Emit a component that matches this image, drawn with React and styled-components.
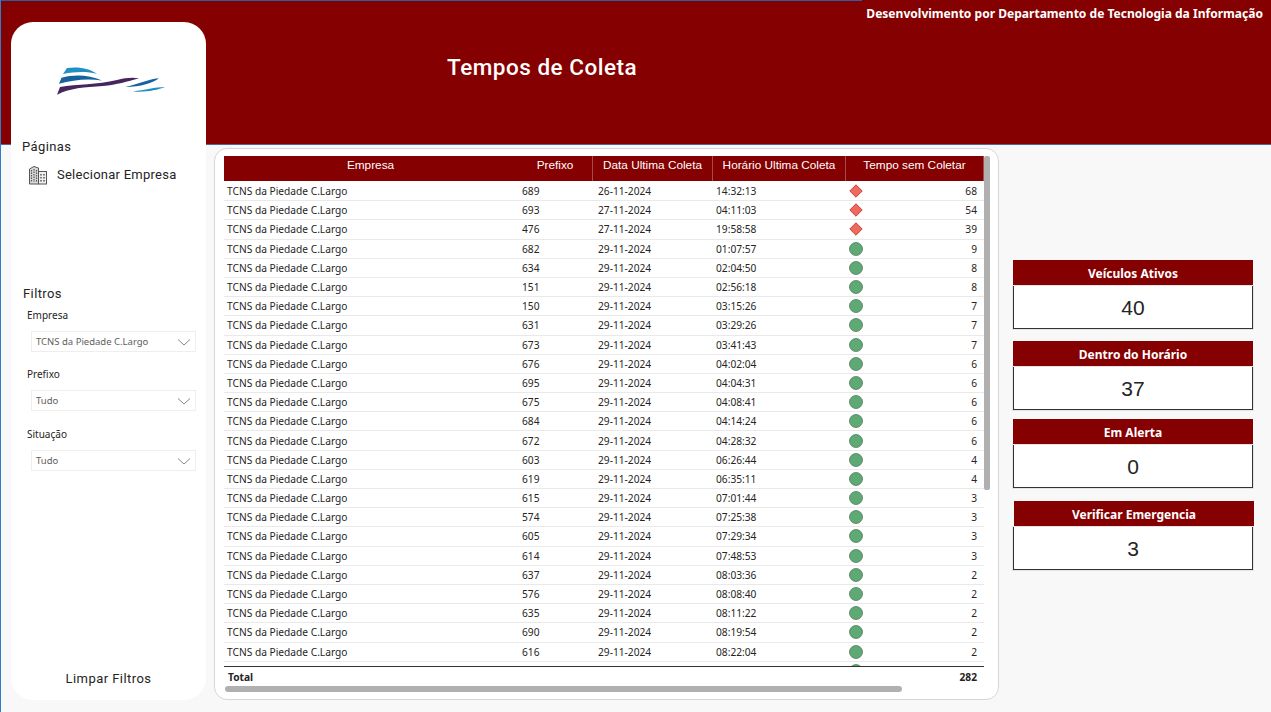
import React from "react";
import styled, { createGlobalStyle } from "styled-components";

const EMPRESA = "TCNS da Piedade C.Largo";

const rows = [
  ["689", "26-11-2024", "14:32:13", 68],
  ["693", "27-11-2024", "04:11:03", 54],
  ["476", "27-11-2024", "19:58:58", 39],
  ["682", "29-11-2024", "01:07:57", 9],
  ["634", "29-11-2024", "02:04:50", 8],
  ["151", "29-11-2024", "02:56:18", 8],
  ["150", "29-11-2024", "03:15:26", 7],
  ["631", "29-11-2024", "03:29:26", 7],
  ["673", "29-11-2024", "03:41:43", 7],
  ["676", "29-11-2024", "04:02:04", 6],
  ["695", "29-11-2024", "04:04:31", 6],
  ["675", "29-11-2024", "04:08:41", 6],
  ["684", "29-11-2024", "04:14:24", 6],
  ["672", "29-11-2024", "04:28:32", 6],
  ["603", "29-11-2024", "06:26:44", 4],
  ["619", "29-11-2024", "06:35:11", 4],
  ["615", "29-11-2024", "07:01:44", 3],
  ["574", "29-11-2024", "07:25:38", 3],
  ["605", "29-11-2024", "07:29:34", 3],
  ["614", "29-11-2024", "07:48:53", 3],
  ["637", "29-11-2024", "08:03:36", 2],
  ["576", "29-11-2024", "08:08:40", 2],
  ["635", "29-11-2024", "08:11:22", 2],
  ["690", "29-11-2024", "08:19:54", 2],
  ["616", "29-11-2024", "08:22:04", 2],
];

const kpis = [
  { title: "Veículos Ativos", value: 40, top: 0 },
  { title: "Dentro do Horário", value: 37, top: 12 },
  { title: "Em Alerta", value: 0, top: 9 },
  { title: "Verificar Emergencia", value: 3, top: 13, shift: 1 },
];

const filters = [
  { label: "Empresa", value: EMPRESA, top: 6 },
  { label: "Prefixo", value: "Tudo", top: 15 },
  { label: "Situação", value: "Tudo", top: 16 },
];

const GlobalStyle = createGlobalStyle`
  html, body {
    margin: 0;
    padding: 0;
    overflow: hidden;
  }
`;

const Page = styled.div`
  display: grid;
  grid-template-columns: 205px 1fr;
  width: 1271px;
  height: 712px;
  box-sizing: border-box;
  padding-top: 22px;
  border-left: 1px solid #2f7ec9;
  background:
    linear-gradient(to right, #2d5f9e 861px, transparent 861px) top left / 100% 1px no-repeat,
    linear-gradient(#4d6a96, #4d6a96) 0 144px / 100% 1px no-repeat,
    linear-gradient(#850000 144px, #f8f8f8 144px);
  font-family: "Noto Sans", sans-serif;
`;

const Sidebar = styled.aside`
  display: flex;
  flex-direction: column;
  width: 195px;
  height: 678px;
  margin-left: 10px;
  box-sizing: border-box;
  background: #fff;
  border-radius: 22px;
`;

const Logo = styled.svg`
  display: block;
  width: 112px;
  height: 35px;
  margin: 41px 0 0 46px;
`;

const PanelTitle = styled.h2`
  margin: ${(p) => p.$top}px 0 0 ${(p) => p.$left}px;
  font: 400 13px/16px Roboto, sans-serif;
  letter-spacing: 0.4px;
  color: #252423;
`;

const PageLink = styled.div`
  display: flex;
  align-items: center;
  gap: 9px;
  margin: 10px 0 0 17px;
  font: 400 13px/20px Roboto, sans-serif;
  letter-spacing: 0.25px;
  color: #252423;
`;

const FilterLabel = styled.div`
  margin: ${(p) => p.$top}px 0 0 16px;
  font: 400 10px/14px "Noto Sans", sans-serif;
  color: #252423;
`;

const Select = styled.div`
  display: flex;
  align-items: center;
  justify-content: space-between;
  width: 165px;
  height: 21px;
  margin: 9px 0 0 20px;
  padding: 0 4px 0 4px;
  box-sizing: border-box;
  background: #fff;
  border: 1px solid #eeeeee;
  font-size: 9.5px;
  color: #605e5c;
`;

const ClearButton = styled.div`
  margin-top: auto;
  padding-bottom: 13px;
  text-align: center;
  font: 400 13px/16px Roboto, sans-serif;
  letter-spacing: 0.45px;
  color: #252423;
`;

const Main = styled.main`
  display: grid;
  grid-template-columns: 785px 1fr;
  grid-template-rows: 122px 1fr;
  min-width: 0;
`;

const Banner = styled.header`
  grid-column: 1 / -1;
  display: flex;
  flex-direction: column;
`;

const Credit = styled.div`
  align-self: flex-end;
  margin: -17px 8px 0 0;
  font: 700 12.06px/17px "Noto Sans", sans-serif;
  color: #fff;
  white-space: nowrap;
`;

const Title = styled.h1`
  margin: 30px 0 0 241px;
  font: 500 22.5px/30px Roboto, sans-serif;
  letter-spacing: 0.5px;
  color: #fff;
`;

const TableCard = styled.section`
  position: relative;
  margin: 4px 0 0 8px;
  width: 785px;
  height: 552px;
  padding: 7px 0 0 9px;
  box-sizing: border-box;
  background: #fff;
  border: 1px solid #d6d6d6;
  border-radius: 13px;
`;

const COLUMNS = "294px 75px 120px 133px 138px";

const HeaderRow = styled.div`
  display: grid;
  grid-template-columns: ${COLUMNS};
  width: 760px;
  height: 25px;
  background: #850000;
`;

const HeaderCell = styled.div`
  padding-top: 1px;
  text-align: center;
  font: 400 11.8px/16px "Liberation Sans", Arial, sans-serif;
  color: #fff;
  border-right: 1px solid ${(p) => (p.$divider ? "#a94a4a" : "transparent")};
`;

const Rows = styled.div`
  width: 760px;
  height: 485px;
  padding-top: 1px;
  box-sizing: border-box;
  overflow: hidden;
`;

const Row = styled.div`
  display: grid;
  grid-template-columns: ${COLUMNS};
  align-items: center;
  height: 19.2px;
  box-sizing: border-box;
  border-bottom: 1px solid #e9e9e9;
  font-size: 10.2px;
  color: #252423;
`;

const Cell = styled.div`
  padding-left: ${(p) => p.$pad ?? 4}px;
  white-space: nowrap;
`;

const TimeCell = styled.div`
  display: flex;
  align-items: center;
  justify-content: space-between;
  padding: 0 7px 0 3px;
`;

const TotalRow = styled.div`
  display: flex;
  justify-content: space-between;
  width: 760px;
  height: 20px;
  padding: 0 7px 0 4px;
  box-sizing: border-box;
  border-top: 1px solid #333;
  font: 700 10.2px/20px "Noto Sans", sans-serif;
  color: #252423;
`;

const VScroll = styled.div`
  position: absolute;
  top: 7px;
  left: 769px;
  width: 6px;
  height: 334px;
  background: #b0b0b0;
  border-radius: 2px;
`;

const HScroll = styled.div`
  position: absolute;
  top: 537px;
  left: 10px;
  width: 677px;
  height: 6px;
  background: #b0b0b0;
  border-radius: 3px;
`;

const KpiColumn = styled.div`
  display: flex;
  flex-direction: column;
  padding: 116px 0 0 22px;
`;

const Kpi = styled.div`
  width: 240px;
  margin-top: ${(p) => p.$top}px;
`;

const KpiTitle = styled.div`
  height: 26px;
  margin-left: ${(p) => p.$shift ?? 0}px;
  margin-right: ${(p) => -(p.$shift ?? 0)}px;
  background: #850000;
  text-align: center;
  font: 700 12px/27px "Noto Sans", sans-serif;
  color: #fff;
`;

const KpiValue = styled.div`
  height: 43px;
  box-sizing: border-box;
  background: #fff;
  border: 1px solid #333;
  border-top: none;
  box-shadow: 0 0 0 1px #e4e4e4;
  text-align: center;
  font: 400 21px/44px "Liberation Sans", Arial, sans-serif;
  color: #252423;
`;

const BuildingIcon = () => (
  <svg width="20" height="20" viewBox="0 0 20 20">
    <path d="M1.5 4 6 1.5 10.5 3V19H1.5Z" fill="#d9d9d9" stroke="#555" />
    <rect x="10.5" y="6.5" width="8" height="12.5" fill="#efefef" stroke="#555" />
    <path d="M3.5 5v12M6 4v13M8.500 5v12" stroke="#555" strokeWidth="1.2" strokeDasharray="1.5 1" />
    <path d="M13 9v8M16 9v8" stroke="#555" strokeWidth="1.5" strokeDasharray="1.5 1.5" />
  </svg>
);

const Chevron = () => (
  <svg width="14" height="8" viewBox="0 0 14 8">
    <path d="M1 1.500 7 7 13 1.500" fill="none" stroke="#8a8886" strokeWidth="1" />
  </svg>
);

const Marker = ({ alert }) => (
  <svg width="14" height="14" viewBox="0 0 14 14">
    {alert ? (
      <path d="M7 .8 13.200 7 7 13.200 .8 7Z" fill="#f0695c" stroke="#b8473d" />
    ) : (
      <circle cx="7" cy="7" r="6.500" fill="#5fa974" stroke="#447052" strokeOpacity="0.7" />
    )}
  </svg>
);

export default function App() {
  return (
    <>
      <GlobalStyle />
      <Page>
        <Sidebar>
          <Logo viewBox="0 0 112 32" preserveAspectRatio="none">
            <path d="M6 10 10 4.500C22 3 33 5 40 10 30 7.500 18 8 6 10Z" fill="#1f8fc4" />
            <path d="M2 19 4.500 13.500C18 10 32 11 45 16 30 14 16 15.500 2 19Z" fill="#14639f" />
            <path d="M0 29 3 22C20 19 40 20 60 15.500 68 13.500 76 13 82 14 70 17 60 20 46 21 28 22 12 23 0 29Z" fill="#46265f" />
            <path d="M68 22C80 20 90 15 102 14 96 18 84 22 68 22Z" fill="#14639f" />
            <path d="M76 26C88 25 98 22 108 22 100 25 88 27 76 26Z" fill="#1f8fc4" />
          </Logo>
          <PanelTitle $top={41} $left={11}>Páginas</PanelTitle>
          <PageLink>
            <BuildingIcon />
            Selecionar Empresa
          </PageLink>
          <PanelTitle $top={101} $left={12}>Filtros</PanelTitle>
          {filters.map((f) => (
            <React.Fragment key={f.label}>
              <FilterLabel $top={f.top}>{f.label}</FilterLabel>
              <Select>
                {f.value}
                <Chevron />
              </Select>
            </React.Fragment>
          ))}
          <ClearButton>Limpar Filtros</ClearButton>
        </Sidebar>

        <Main>
          <Banner>
            <Credit>Desenvolvimento por Departamento de Tecnologia da Informação</Credit>
            <Title>Tempos de Coleta</Title>
          </Banner>

          <TableCard>
            <HeaderRow>
              <HeaderCell>Empresa</HeaderCell>
              <HeaderCell $divider>Prefixo</HeaderCell>
              <HeaderCell $divider>Data Ultima Coleta</HeaderCell>
              <HeaderCell $divider>Horário Ultima Coleta</HeaderCell>
              <HeaderCell $divider>Tempo sem Coletar</HeaderCell>
            </HeaderRow>
            <Rows>
              {rows.map(([prefixo, data, hora, tempo]) => (
                <Row key={prefixo}>
                  <Cell $pad={3}>{EMPRESA}</Cell>
                  <Cell>{prefixo}</Cell>
                  <Cell $pad={5}>{data}</Cell>
                  <Cell $pad={3}>{hora}</Cell>
                  <TimeCell>
                    <Marker alert={tempo > 30} />
                    {tempo}
                  </TimeCell>
                </Row>
              ))}
              {/* linha seguinte, só o marcador aparece antes do corte */}
              <Row>
                <Cell />
                <Cell />
                <Cell />
                <Cell />
                <TimeCell>
                  <Marker />
                </TimeCell>
              </Row>
            </Rows>
            <TotalRow>
              <span>Total</span>
              <span>282</span>
            </TotalRow>
            <VScroll />
            <HScroll />
          </TableCard>

          <KpiColumn>
            {kpis.map((k) => (
              <Kpi key={k.title} $top={k.top}>
                <KpiTitle $shift={k.shift}>{k.title}</KpiTitle>
                <KpiValue>{k.value}</KpiValue>
              </Kpi>
            ))}
          </KpiColumn>
        </Main>
      </Page>
    </>
  );
}
